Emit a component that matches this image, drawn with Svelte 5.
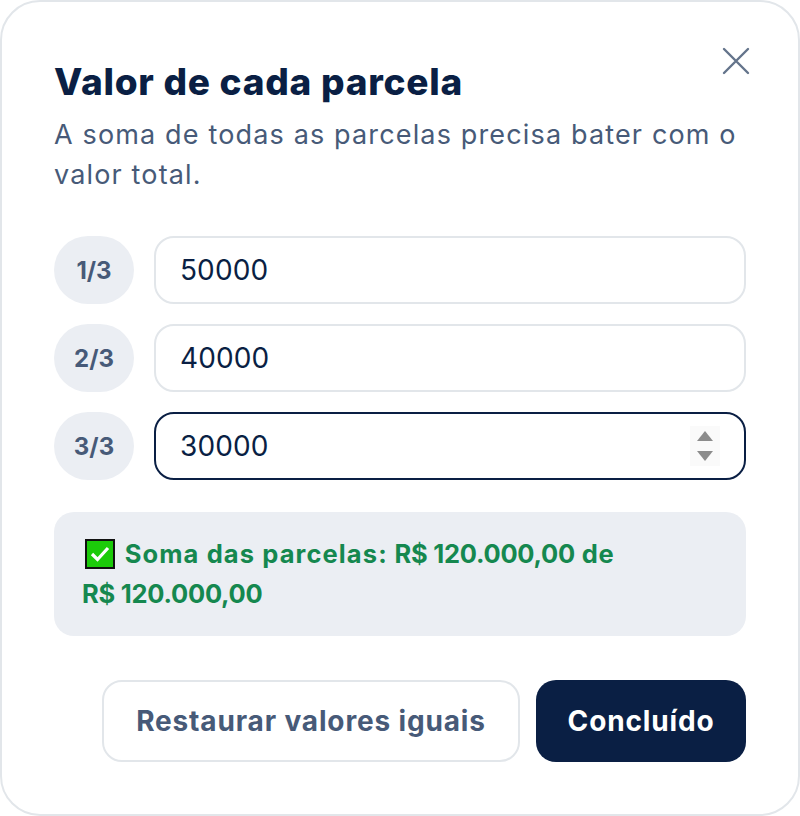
<script>
  let parcels = $state([
    { label: "1/3", value: "50000" },
    { label: "2/3", value: "40000" },
    { label: "3/3", value: "30000" }
  ]);
</script>

<div class="modal">
  <button class="close" aria-label="Fechar">
    <svg width="30" height="30" viewBox="0 0 30 30" fill="none">
      <path d="M3 3L27 27M27 3L3 27" stroke="#64748b" stroke-width="2.4" stroke-linecap="round" />
    </svg>
  </button>

  <h2>Valor de cada parcela</h2>
  <p class="subtitle">A soma de todas as parcelas precisa bater com o valor total.</p>

  <div class="rows">
    {#each parcels as parcel, i}
      <div class="row">
        <span class="badge">{parcel.label}</span>
        <div class="field" class:active={i === 2}>
          <input type="text" bind:value={parcel.value} />
          {#if i === 2}
            <span class="spin">
              <i class="up"></i>
              <i class="down"></i>
            </span>
          {/if}
        </div>
      </div>
    {/each}
  </div>

  <div class="sum">
    <svg class="check" width="30" height="30" viewBox="0 0 30 30">
      <rect x="1" y="1" width="28" height="28" fill="#1ccb0a" stroke="#111" stroke-width="2" />
      <path d="M7 15L12.5 20.5L23 9" fill="none" stroke="#fff" stroke-width="3.2" />
    </svg>
    <span class="label">Soma das parcelas:</span>
    <span class="amount">R$&nbsp;120.000,00</span> de
    <span class="amount">R$&nbsp;120.000,00</span>
  </div>

  <div class="actions">
    <button class="secondary">Restaurar valores iguais</button>
    <button class="primary">Concluído</button>
  </div>
</div>

<style>
  :global(body) {
    margin: 0;
    background: #fff;
  }

  .modal {
    position: relative;
    box-sizing: border-box;
    width: 800px;
    height: 816px;
    padding: 52px 52px 0;
    border: 2px solid #e2e6ea;
    border-radius: 40px;
    background: #fff;
    font-family: Inter, "Noto Sans", sans-serif;
  }

  .close {
    position: absolute;
    top: 44px;
    right: 47px;
    padding: 0;
    border: 0;
    background: none;
    line-height: 0;
  }

  h2 {
    margin: 0;
    font-size: 37px;
    line-height: 56px;
    font-weight: 800;
    letter-spacing: 0.75px;
    color: #0a1f44;
  }

  .subtitle {
    margin: 0;
    padding-top: 5px;
    font-size: 27px;
    line-height: 40px;
    letter-spacing: 1.15px;
    color: #475a78;
  }

  .rows {
    display: flex;
    flex-direction: column;
    gap: 20px;
    margin-top: 41px;
  }

  .row {
    display: flex;
    gap: 20px;
  }

  .badge {
    display: flex;
    align-items: center;
    justify-content: center;
    flex: none;
    width: 80px;
    height: 68px;
    border-radius: 34px;
    background: #ebeef3;
    font-size: 24px;
    font-weight: 700;
    color: #475a78;
  }

  .field {
    position: relative;
    flex: 1;
  }

  input {
    display: block;
    box-sizing: border-box;
    width: 100%;
    height: 68px;
    padding: 0 24px;
    border: 2px solid #e2e6ea;
    border-radius: 20px;
    outline: none;
    font-family: inherit;
    font-size: 28px;
    letter-spacing: 0.1px;
    color: #0a1f44;
  }

  .active input {
    border-color: #0a1f44;
  }

  .spin {
    position: absolute;
    top: 14px;
    right: 26px;
    display: flex;
    flex-direction: column;
    align-items: center;
    justify-content: center;
    gap: 10px;
    width: 30px;
    height: 40px;
    background: #fafafa;
  }

  .spin i {
    width: 0;
    height: 0;
    border-left: 8px solid transparent;
    border-right: 8px solid transparent;
  }

  .spin .up {
    border-bottom: 10px solid #8c8c8c;
  }

  .spin .down {
    border-top: 10px solid #8c8c8c;
  }

  .sum {
    box-sizing: border-box;
    height: 124px;
    margin-top: 32px;
    padding: 22px 28px;
    border-radius: 20px;
    background: #ebeef3;
    font-size: 25.5px;
    line-height: 40px;
    font-weight: 700;
    letter-spacing: 0.65px;
    color: #15884f;
  }

  .label {
    letter-spacing: 1.1px;
  }

  .amount {
    letter-spacing: -0.25px;
  }

  .check {
    margin: 0 3px 0 3px;
    vertical-align: -6px;
  }

  .actions {
    display: flex;
    justify-content: flex-end;
    gap: 16px;
    margin-top: 44px;
  }

  .actions button {
    box-sizing: border-box;
    height: 82px;
    border-radius: 20px;
    font-family: inherit;
    font-size: 28px;
    font-weight: 700;
    letter-spacing: 0.85px;
  }

  .secondary {
    width: 418px;
    border: 2px solid #e2e6ea;
    background: #fff;
    color: #475a78;
  }

  .primary {
    width: 210px;
    border: 0;
    background: #0a1f44;
    color: #fff;
  }
</style>
